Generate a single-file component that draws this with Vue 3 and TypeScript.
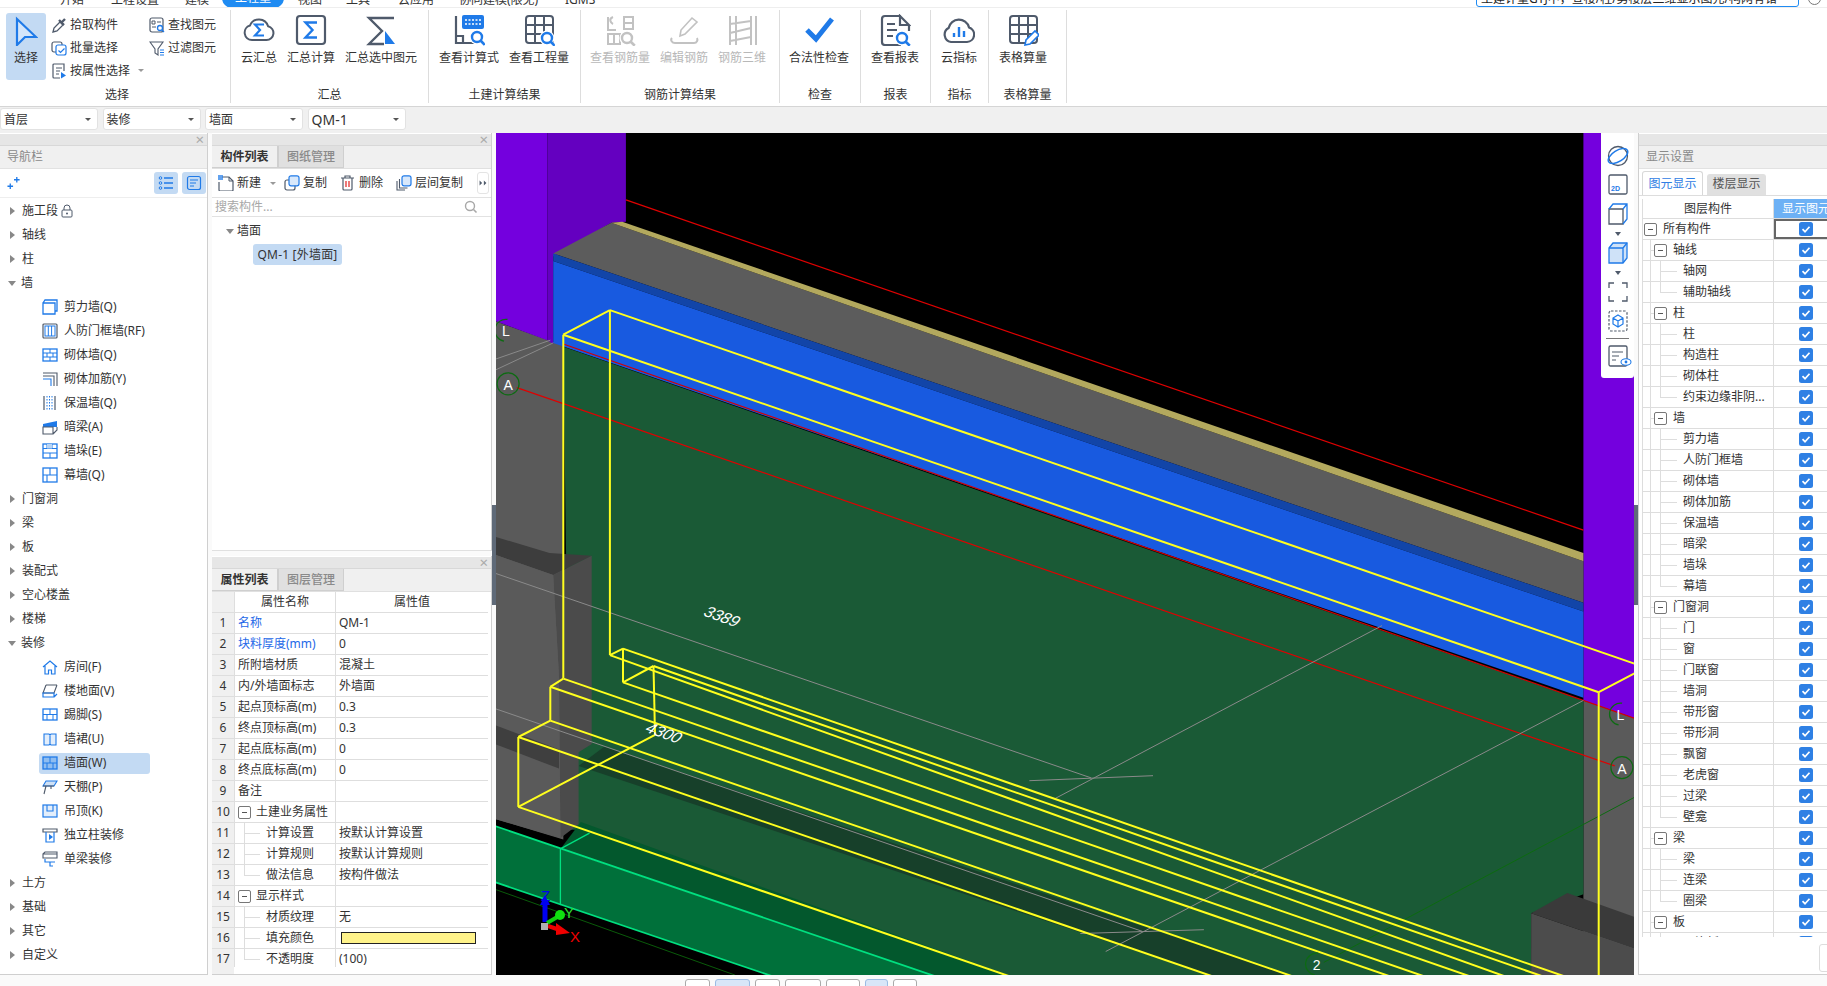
<script setup lang="ts">
type P = [number, number]
const D = '#4f5a6b'
const B = '#1f7ae8'
const G = '#c2c2c2'
const s = (c: string, w = 2) => `fill="none" stroke="${c}" stroke-width="${w}"`

const lens = (cx: number, cy: number, r = 5, c = B) =>
  `<circle cx="${cx}" cy="${cy}" r="${r + 2.5}" fill="#fff"/><circle cx="${cx}" cy="${cy}" r="${r}" ${s(c, 2.4)}/><path d="M${cx + r * 0.75} ${cy + r * 0.75}l4 4" ${s(c, 2.6)}/>`
const grid = (c: string) =>
  `<rect x="3" y="2" width="27" height="27" rx="3" ${s(c)}/><path d="M3 11h27M3 20h27M12 2v27M21 2v27" ${s(c)}/>`

const bigIcons: Record<string, string> = {
  cloudSum: `<path d="M9 26h14.5a7 7 0 0 0 1.6-13.8A9.6 9.6 0 0 0 7 11.5 7.4 7.4 0 0 0 9 26z" ${s(D)}/><path d="M21 10.5h-9l5 5.5-5 5.5h9" ${s(B, 2.2)}/>`,
  sum: `<rect x="2" y="2" width="28" height="28" rx="3" ${s(D, 2.2)}/><path d="M22 8.5H10.5l7 7.5-7 7.5H22" ${s(B, 2.4)}/>`,
  sumSel: `<path d="M29 4H4l13 13L4 30h15" ${s(D, 2.4)}/><path d="M20 17l10 13H20z" fill="${B}"/>`,
  calc: `<path d="M3 2v27h21M3 22h7v7" ${s(D, 2.2)}/><rect x="9" y="1" width="22" height="14" rx="2" fill="${B}"/><path d="M12 6h16M12 10h16" fill="none" stroke="#fff" stroke-width="1.6" stroke-dasharray="2 1.5"/>${lens(24, 23)}`,
  qty: `${grid(D)}${lens(24, 24)}`,
  rebarQty: `<path d="M4 3v13h8M4 20h12v10H4zM10 20v10" ${s(G)}/><path d="M20 3h9v12h-9zM20 9h9M9 3c-5 2-2 6 0 7" ${s(G)}/>${lens(23, 24, 5, G)}`,
  rebarEdit: `<path d="M4 24c-2 2 0 5 3 5h19c3 0 4-3 3-5" ${s(G)}/><path d="M12 22l1-6L24 4l5 4-12 12z" ${s(G, 1.6)}/>`,
  rebar3d: `<path d="M4 2v29M10 2v29M25 2v29M30 2v29M4 10l21-3M4 19l21-5M4 27l21-4" ${s(G, 2)}/>`,
  check: `<path d="M4 16l9 9L29 5" ${s(B, 5)}/>`,
  report: `<path d="M22 2H6a3 3 0 0 0-3 3v23a3 3 0 0 0 3 3h16M21 2l9 9h-9zM30 11v6" ${s(D, 2.2)}/><path d="M8 10h8M8 16h10M8 22h6" ${s(D, 2)}/>${lens(23, 24)}`,
  index: `<path d="M8 28h16a7.5 7.5 0 0 0 2-14.6A10.5 10.5 0 0 0 5.6 14 7.5 7.5 0 0 0 8 28z" ${s(D, 2.2)}/><path d="M11 19v4M16 13v10M21 17v6" ${s(B, 2.4)}/>`,
  sheet: `${grid(D)}<path d="M18 31l1-5 9-9 4 4-9 9z" fill="#fff" stroke="${B}" stroke-width="1.6"/>`,
}
const smallIcons: Record<string, string> = {
  pick: `<path d="M2 15l1-4 6-6 3 3-6 6z" ${s(D, 1.3)}/><path d="M8 3l5 5M10 6l4-4" ${s(D, 2.4)}/>`,
  batch: `<rect x="1" y="2" width="10" height="10" rx="2" ${s(D, 1.2)}/><rect x="5" y="5" width="10" height="10" rx="2" fill="#fff" stroke="${B}" stroke-width="1.2"/><path d="M7.5 10.5l2 2 4-4" ${s(B, 1.2)}/>`,
  attr: `<path d="M3 1h10v7M3 1a1 1 0 0 0-1 1v12a1 1 0 0 0 1 1h6" ${s(D, 1.2)}/><path d="M5 5h6M5 8h4M5 11h3" ${s(D, 1.2)}/><path d="M10 9l5 3.5-5 3z" fill="${B}"/>`,
  find: `<rect x="1" y="1" width="13" height="14" rx="2" ${s(D, 1.2)}/><path d="M3 4h3v3H3zM8 5h4M3 10h4" ${s(D, 1)}/><circle cx="11" cy="11" r="2.5" ${s(B, 1.3)}/><path d="M13 13l2 2" ${s(B, 1.3)}/>`,
  filter: `<path d="M1 2h13L9 9v6L6 13V9z" ${s(D, 1.1)}/><path d="M11 10h4M11 12.5h4M11 15h4" ${s(B, 1.1)}/>`,
  list: `<path d="M6 3h9M6 8h9M6 13h9" ${s(B, 1.3)}/><circle cx="2.5" cy="3" r="1.3" ${s(B, 1)}/><circle cx="2.5" cy="8" r="1.3" ${s(B, 1)}/><circle cx="2.5" cy="13" r="1.3" ${s(B, 1)}/>`,
  doc: `<rect x="1.5" y="1.5" width="13" height="13" rx="2" ${s(B, 1.2)}/><path d="M4 5h8M4 8h6M4 11h4" ${s(B, 1.1)}/>`,
  spark: `<path d="M10 1v6M7 4h6M3 8v6M0 11h6" ${s(B, 1.4)}/>`,
  anew: `<path d="M4 2h7l4 4v9a1 1 0 0 1-1 1H2a1 1 0 0 1-1-1V7" ${s(D, 1.2)}/><path d="M11 2v4h4" ${s(D, 1)}/><rect x="0" y="0" width="5" height="5" fill="${B}" opacity=".7"/>`,
  copy: `<rect x="1" y="5" width="10" height="10" rx="2" ${s(D, 1.2)}/><rect x="5" y="0.8" width="10" height="10" rx="2" fill="#d8e8fb" stroke="${B}" stroke-width="1.2"/>`,
  del: `<path d="M1 3h13M5 3V1h5v2M3 3v11a1 1 0 0 0 1 1h7a1 1 0 0 0 1-1V3" ${s(D, 1.2)}/><path d="M6 6v6M9 6v6" stroke="#e02020" stroke-width="1.2"/>`,
  floorCopy: `<path d="M1 6v9h8M3.500 4v9h8" ${s(D, 1.1)}/><rect x="6" y="0.8" width="9" height="10" rx="2" fill="#d8e8fb" stroke="${B}" stroke-width="1.2"/>`,
  search: `<circle cx="7" cy="7" r="4.500" ${s('#a8a8a8', 1.4)}/><path d="M10.500 10.500l3 3" ${s('#a8a8a8', 1.6)}/>`,
  more: `<path d="M3 5l3 3-3 3zM8 5l3 3-3 3z" fill="${D}"/>`,
  lock: `<rect x="2" y="6" width="10" height="7" rx="1" ${s(D, 1)}/><path d="M4 6V4a3 3 0 0 1 6 0v2" ${s(D, 1)}/><circle cx="7" cy="9.500" r="1" fill="${D}"/>`,
  shear: `<path d="M1 4h12v11H1zM1 4l2-3h12v11h-2" ${s(B, 1.3)}/>`,
  rf: `<rect x="1" y="1" width="14" height="14" rx="1" ${s(D, 1.2)}/><rect x="3" y="3" width="10" height="10" ${s(B, 1)}/><path d="M6.300 3v10M9.600 3v10" ${s(B, 1)}/>`,
  brick: `<rect x="1" y="2" width="14" height="12" ${s(B, 1.3)}/><path d="M1 6h14M1 10h14M8 2v4M5 6v4M11 6v4M8 10v4" ${s(B, 1)}/>`,
  reinforce: `<path d="M1 2h14v13M1 5h11v10" ${s(D, 1.1)}/><path d="M1 8h8v7" ${s(B, 1.1)}/>`,
  insul: `<path d="M2 1v14M13 1v14" ${s(D, 1.2)}/><path d="M7.500 1v14M5 1v14M10 1v14" fill="none" stroke="${B}" stroke-width="1" stroke-dasharray="1.500 1.500"/>`,
  hidden: `<path d="M1 5l14-3v6H1z" fill="${B}"/><path d="M1 8h10v7H1zM11 15l4-4V8" ${s(D, 1.1)}/>`,
  pier: `<rect x="1" y="1" width="14" height="14" ${s(B, 1.3)}/><path d="M1 5.500h14M1 10h14M5 1v4.500M10 1v4.500M8 10v5" ${s(B, 1)}/><path d="M5 1h5v4.500H5z" fill="#b7d4f5"/>`,
  curtain: `<rect x="1" y="1" width="14" height="14" ${s(B, 1.3)}/><path d="M1 8h14M8 1v7M5 8v7" ${s(B, 1.1)}/>`,
  room: `<path d="M1 8l7-6 7 6M3 7v8h3.500v-4h3v4H13V7" ${s(B, 1.2)}/>`,
  floor: `<path d="M4 2h11M4 2L1 10h11l3-8" ${s(D, 1.1)}/><path d="M1 10h11v4H1zM12 14l3-3" ${s(B, 1.2)}/>`,
  skirt: `<rect x="1" y="2" width="14" height="11" ${s(B, 1.3)}/><path d="M1 7.500h14M8 2v5.500M5 7.500V13M11 7.500V13" ${s(B, 1)}/>`,
  wainscot: `<path d="M2 3h5l1 1 1-1h5v11H9l-1-1-1 1H2zM8 4v9" fill="#e3eefb" stroke="${B}" stroke-width="1.100"/>`,
  face: `<rect x="1" y="2" width="14" height="12" fill="#8fbdf0" stroke="${B}" stroke-width="1.300"/><path d="M1 8h14M8 2v6M5 8v6M11 8v6" ${s(B, 1)}/>`,
  ceiling: `<path d="M1 7l3-5h11l-3 5z" fill="#cfe1f6" stroke="${B}" stroke-width="1.100"/><path d="M1 7h11M4 7l-2 8M9 7v3" ${s(D, 1.100)}/>`,
  hang: `<rect x="1" y="2" width="14" height="12" fill="#e3eefb" stroke="${B}" stroke-width="1.200"/><path d="M5 2v6h6V2" ${s(B, 1.100)}/>`,
  column: `<path d="M1 2h14v3H1z" ${s(D, 1.200)}/><path d="M4 5v10h8V5" ${s(B, 1.200)}/><path d="M7 7l4 3-4 3z" fill="${B}"/>`,
  beam: `<path d="M1 3h14v4H1zM1 3l2-2h12v2" ${s(D, 1.100)}/><path d="M3 8v3h10M8 11v4h3" ${s(B, 1.200)}/>`,
}

interface BigBtn { label: string; icon: string; muted?: boolean }
interface Group { title: string; width: number; pad: number; btns: BigBtn[] }
const groups: Group[] = [
  { title: '汇总', width: 198, pad: 10, btns: [{ label: '云汇总', icon: 'cloudSum' }, { label: '汇总计算', icon: 'sum' }, { label: '汇总选中图元', icon: 'sumSel' }] },
  { title: '土建计算结果', width: 152, pad: 10, btns: [{ label: '查看计算式', icon: 'calc' }, { label: '查看工程量', icon: 'qty' }] },
  { title: '钢筋计算结果', width: 199, pad: 9, btns: [{ label: '查看钢筋量', icon: 'rebarQty', muted: true }, { label: '编辑钢筋', icon: 'rebarEdit', muted: true }, { label: '钢筋三维', icon: 'rebar3d', muted: true }] },
  { title: '检查', width: 81, pad: 9, btns: [{ label: '合法性检查', icon: 'check' }] },
  { title: '报表', width: 70, pad: 10, btns: [{ label: '查看报表', icon: 'report' }] },
  { title: '指标', width: 58, pad: 10, btns: [{ label: '云指标', icon: 'index' }] },
  { title: '表格算量', width: 78, pad: 10, btns: [{ label: '表格算量', icon: 'sheet' }] },
]
const menus = [
  { t: '开始', x: 60 }, { t: '工程设置', x: 111 }, { t: '建模', x: 185 }, { t: '工程量', x: 222, on: true },
  { t: '视图', x: 298 }, { t: '工具', x: 346 }, { t: '云应用', x: 398 }, { t: '协同建模(限免)', x: 459 }, { t: 'IGMS', x: 565 },
]
const dropdowns = ['首层', '装修', '墙面', 'QM-1']

interface NavItem { t: string; kind: 'closed' | 'open' | 'leaf'; icon?: string; on?: boolean; lock?: boolean }
const nav: NavItem[] = [
  { t: '施工段', kind: 'closed', lock: true }, { t: '轴线', kind: 'closed' }, { t: '柱', kind: 'closed' }, { t: '墙', kind: 'open' },
  { t: '剪力墙(Q)', kind: 'leaf', icon: 'shear' }, { t: '人防门框墙(RF)', kind: 'leaf', icon: 'rf' }, { t: '砌体墙(Q)', kind: 'leaf', icon: 'brick' },
  { t: '砌体加筋(Y)', kind: 'leaf', icon: 'reinforce' }, { t: '保温墙(Q)', kind: 'leaf', icon: 'insul' }, { t: '暗梁(A)', kind: 'leaf', icon: 'hidden' },
  { t: '墙垛(E)', kind: 'leaf', icon: 'pier' }, { t: '幕墙(Q)', kind: 'leaf', icon: 'curtain' },
  { t: '门窗洞', kind: 'closed' }, { t: '梁', kind: 'closed' }, { t: '板', kind: 'closed' }, { t: '装配式', kind: 'closed' }, { t: '空心楼盖', kind: 'closed' }, { t: '楼梯', kind: 'closed' },
  { t: '装修', kind: 'open' }, { t: '房间(F)', kind: 'leaf', icon: 'room' }, { t: '楼地面(V)', kind: 'leaf', icon: 'floor' }, { t: '踢脚(S)', kind: 'leaf', icon: 'skirt' },
  { t: '墙裙(U)', kind: 'leaf', icon: 'wainscot' }, { t: '墙面(W)', kind: 'leaf', icon: 'face', on: true }, { t: '天棚(P)', kind: 'leaf', icon: 'ceiling' },
  { t: '吊顶(K)', kind: 'leaf', icon: 'hang' }, { t: '独立柱装修', kind: 'leaf', icon: 'column' }, { t: '单梁装修', kind: 'leaf', icon: 'beam' },
  { t: '土方', kind: 'closed' }, { t: '基础', kind: 'closed' }, { t: '其它', kind: 'closed' }, { t: '自定义', kind: 'closed' },
]

interface Row { name: string; value?: string; blue?: boolean; group?: boolean; child?: boolean; last?: boolean; swatch?: boolean }
const rows: Row[] = [
  { name: '名称', value: 'QM-1', blue: true }, { name: '块料厚度(mm)', value: '0', blue: true }, { name: '所附墙材质', value: '混凝土' },
  { name: '内/外墙面标志', value: '外墙面' }, { name: '起点顶标高(m)', value: '0.3' }, { name: '终点顶标高(m)', value: '0.3' },
  { name: '起点底标高(m)', value: '0' }, { name: '终点底标高(m)', value: '0' }, { name: '备注' },
  { name: '土建业务属性', group: true }, { name: '计算设置', value: '按默认计算设置', child: true }, { name: '计算规则', value: '按默认计算规则', child: true },
  { name: '做法信息', value: '按构件做法', child: true, last: true }, { name: '显示样式', group: true }, { name: '材质纹理', value: '无', child: true },
  { name: '填充颜色', child: true, swatch: true }, { name: '不透明度', value: '(100)', child: true, last: true },
]

const layerGroups: [string, string[]][] = [
  ['轴线', ['轴网', '辅助轴线']], ['柱', ['柱', '构造柱', '砌体柱', '约束边缘非阴...']],
  ['墙', ['剪力墙', '人防门框墙', '砌体墙', '砌体加筋', '保温墙', '暗梁', '墙垛', '幕墙']],
  ['门窗洞', ['门', '窗', '门联窗', '墙洞', '带形窗', '带形洞', '飘窗', '老虎窗', '过梁', '壁龛']],
  ['梁', ['梁', '连梁', '圈梁']], ['板', ['现浇板']],
]
interface Layer { t: string; level: number; last?: boolean }
const layers: Layer[] = [{ t: '所有构件', level: 0 }]
for (const [g, kids] of layerGroups) {
  layers.push({ t: g, level: 1 })
  kids.forEach((k, i) => layers.push({ t: k, level: 2, last: i === kids.length - 1 }))
}

const arrowSvg = `<path d="M13 14h6l-3 4z" fill="${D}"/>`
const sideIcons = [
  { h: 30, svg: `<circle cx="16" cy="16" r="9.500" ${s(D, 1.300)}/><ellipse cx="16" cy="16" rx="11" ry="5.500" transform="rotate(-32 16 16)" ${s(B, 1.500)}/>` },
  { h: 28, svg: `<rect x="7" y="6" width="18" height="19" rx="1.500" ${s(D, 1.300)}/><text x="9" y="22" font-size="7" font-weight="700" fill="${B}" font-family="Liberation Sans">2D</text>` },
  { h: 30, svg: `<path d="M7 11h14v15H7z" fill="none" stroke="${D}" stroke-width="1.300"/><path d="M7 11l4-5h14v15l-4 5M21 11l4-5" ${s(B, 1.300)}/>` },
  { h: 10, svg: arrowSvg },
  { h: 28, svg: `<path d="M7 11l4-5h14v15l-4 5H7z" fill="#cfe2f8" stroke="${B}" stroke-width="1.300"/><path d="M7 11h14v15M21 11l4-5" ${s(B, 1.300)}/>` },
  { h: 12, svg: arrowSvg },
  { h: 26, svg: `<path d="M7 12V7h5M20 7h5v5M25 20v5h-5M12 25H7v-5" ${s(D, 1.300)}/>` },
  { h: 32, svg: `<rect x="7" y="6" width="18" height="20" rx="2" fill="none" stroke="${D}" stroke-width="1.200" stroke-dasharray="2.500 1.500"/><path d="M16 10l5 3v6l-5 3-5-3v-6zM11 13l5 3 5-3M16 16v6" ${s(B, 1.200)}/>` },
]

/* Scene: coordinates are measured on a 1568×1568 normalised crop of the viewport */
const sx = 1 / 1.3754
const sy = 1 / 1.832
const mx = (x: number) => +(x * sx - 1).toFixed(1)
const my = (y: number) => +(y * sy - 3).toFixed(1)
const pts = (a: P[]) => a.map(([x, y]) => `${mx(x)},${my(y)}`).join(' ')
const polys: { fill: string; p: string }[] = ([
  ['#5a5a5a', [[0, 350], [94, 395], [94, 1300], [0, 1262]]],
  ['#7400de', [[0, 5], [72, 5], [72, 385], [0, 350]]],
  ['#6400c0', [[72, 5], [180, 5], [180, 168], [160, 170], [80, 232], [80, 392], [72, 385]]],
  ['#7400de', [[1497, 5], [1568, 5], [1568, 1078], [1497, 1045]]],
  ['#5a5a5a', [[1497, 1045], [1568, 1078], [1568, 1550], [1497, 1550]]],
  ['#5c5c5c', [[160, 170], [1497, 790], [1497, 866], [80, 226]]],
  ['#b3a95e', [[160, 170], [175, 168], [1497, 775], [1497, 790]]],
  ['#1245a8', [[80, 226], [1497, 866], [1497, 882], [80, 240]]],
  ['#185ae0', [[80, 240], [1497, 882], [1497, 1040], [80, 390]]],
  ['#1a5a36', [[94, 397], [1497, 1045], [1497, 1400], [1425, 1435], [1425, 1550], [710, 1550], [120, 1282], [100, 1282], [100, 1000]]],
  ['#03582d', [[90, 1317], [118, 1268], [710, 1550], [605, 1550]]],
  ['#00703a', [[0, 1275], [90, 1317], [605, 1550], [381, 1550], [0, 1378]]],
  ['#17402a', [[115, 1165], [150, 1130], [1096, 1550], [986, 1550]]],
  ['#3d3d3d', [[0, 745], [75, 775], [133, 780], [80, 815], [0, 778]]],
  ['#4b4b4b', [[80, 815], [133, 780], [133, 1125], [115, 1140], [115, 1272], [90, 1297], [88, 1000]]],
  ['#5a5a5a', [[0, 778], [80, 815], [88, 1000], [90, 1297], [0, 1262]]],
  ['#3f3f3f', [[0, 1090], [88, 1135], [88, 1170], [0, 1125]]],
  ['#3a3a3a', [[1425, 1435], [1475, 1398], [1568, 1442], [1568, 1500]]],
  ['#4c4c4c', [[1425, 1435], [1568, 1500], [1568, 1550], [1425, 1550]]],
] as [string, P[]][]).map(([fill, a]) => ({ fill, p: pts(a) }))

const L = (c: string, w: number, ...a: P[]) => ({ c, w, p: pts(a) })
const Y = '#ffff1e'
const W = 2
const lines = [
  L('#e00000', 1.2, [180, 128], [1497, 733]),
  L('#d40000', 1.2, [94, 392], [1568, 1078]),
  L('#e00000', 1.2, [30, 472], [1540, 1165]),
  L('#8a8a8a', 1, [0, 812], [820, 1187]),
  L('#8a8a8a', 1, [0, 1060], [890, 1468]),
  L('#8a8a8a', 1, [770, 1225], [1220, 908]),
  L('#8a8a8a', 1, [840, 1505], [1497, 1045]),
  L('#8a8a8a', 1, [735, 1192], [905, 1183]),
  L('#8a8a8a', 1, [805, 1472], [975, 1465]),
  L('#8a8a8a', 1, [0, 440], [80, 390]),
  L('#8a8a8a', 1, [0, 420], [76, 385]),
  L('#0c6a10', 1, [1140, 1525], [1568, 1222]),
  L('#0a5a0a', 1, [0, 1391], [330, 1548]),
  L('#00e080', 1.8, [0, 1378], [381, 1550]),
  L('#00e080', 1.8, [0, 1275], [605, 1550]),
  L('#00e080', 1.3, [90, 1317], [90, 1420]),
  L('#00e080', 1.3, [90, 1317], [130, 1288]),
  L(Y, W, [158, 330], [1568, 978]),
  L(Y, W, [94, 375], [158, 330]),
  L(Y, W, [94, 375], [1518, 1030]),
  L(Y, W, [1518, 1030], [1568, 995]),
  L(Y, W, [94, 375], [94, 1005]),
  L(Y, W, [158, 330], [158, 962]),
  L(Y, W, [1518, 1030], [1518, 1550]),
  L(Y, W, [158, 962], [176, 950]),
  L(Y, W, [176, 950], [176, 1012]),
  L(Y, W, [176, 1012], [218, 982]),
  L(Y, W, [218, 982], [220, 1108]),
  L(Y, W, [158, 962], [1388, 1550]),
  L(Y, W, [176, 950], [1470, 1550]),
  L(Y, W, [218, 982], [1440, 1550]),
  L(Y, W, [176, 1012], [1340, 1550]),
  L(Y, W, [94, 1005], [76, 1020]),
  L(Y, W, [76, 1020], [76, 1082]),
  L(Y, W, [76, 1082], [32, 1112]),
  L(Y, W, [32, 1112], [32, 1240]),
  L(Y, W, [32, 1240], [220, 1108]),
  L(Y, W, [94, 1005], [1277, 1550]),
  L(Y, W, [76, 1020], [1230, 1550]),
  L(Y, W, [76, 1082], [1096, 1550]),
  L(Y, W, [32, 1112], [986, 1550]),
  L(Y, W, [32, 1240], [707, 1550]),
]
const axes = [
  { t: 'L', x: 15, y: 367, partial: true }, { t: 'A', x: 18, y: 465 }, { t: 'L', x: 1548, y: 1070, partial: true }, { t: 'A', x: 1550, y: 1168 }, { t: '2', x: 1130, y: 1528, partial: true },
].map((a) => ({ t: a.t, x: mx(a.x), y: my(a.y), partial: a.partial }))
const dims = [
  { t: '3389', x: mx(312), y: my(892) },
  { t: '4300', x: mx(232), y: my(1105) },
]
const statusBtns = [
  { w: 25, on: false }, { w: 35, on: true }, { w: 25, on: false }, { w: 36, on: false }, { w: 34, on: false }, { w: 23, on: true }, { w: 24, on: false },
]
</script>

<template>
  <div class="app">
    <header class="menubar">
      <span v-for="m in menus" :key="m.t" class="menu" :class="{ on: m.on }" :style="{ left: m.x + 'px' }">{{ m.t }}</span>
      <div class="helpbox">土建计量GTJ中，查楼/柱/剪楼层二维显示图元/构网有错</div>
      <span class="help-dot"></span>
    </header>

    <section class="ribbon">
      <div class="group first">
        <div class="group-body">
          <button class="select-btn">
            <svg width="24" height="30" viewBox="0 0 24 30"><path d="M3 3l19 18H11l-8 8z" fill="#d5e6fa" stroke="#1f7ae8" stroke-width="2.200" /></svg>
            <span>选择</span>
          </button>
          <div class="small-col">
            <div class="small"><svg width="16" height="16" viewBox="0 0 16 16" v-html="smallIcons.pick"></svg>拾取构件</div>
            <div class="small"><svg width="16" height="16" viewBox="0 0 16 16" v-html="smallIcons.batch"></svg>批量选择</div>
            <div class="small"><svg width="16" height="16" viewBox="0 0 16 16" v-html="smallIcons.attr"></svg>按属性选择<i class="caret ml"></i></div>
          </div>
          <div class="small-col second">
            <div class="small"><svg width="16" height="16" viewBox="0 0 16 16" v-html="smallIcons.find"></svg>查找图元</div>
            <div class="small"><svg width="16" height="16" viewBox="0 0 16 16" v-html="smallIcons.filter"></svg>过滤图元</div>
          </div>
        </div>
        <div class="group-title first-title">选择</div>
      </div>
      <div v-for="g in groups" :key="g.title" class="group" :style="{ width: g.width + 'px' }">
        <div class="group-body big-row" :style="{ paddingLeft: g.pad + 'px' }">
          <div v-for="b in g.btns" :key="b.label" class="big" :class="{ muted: b.muted }">
            <svg width="32" height="32" viewBox="0 0 32 32" v-html="bigIcons[b.icon]"></svg>
            <span>{{ b.label }}</span>
          </div>
        </div>
        <div class="group-title">{{ g.title }}</div>
      </div>
    </section>

    <section class="selectors">
      <div v-for="d in dropdowns" :key="d" class="dropdown"><span :class="{ latin: d === 'QM-1' }">{{ d }}</span><i class="caret dark"></i></div>
    </section>

    <main class="workspace">
      <aside class="panel nav">
        <div class="strip"><span class="close">×</span></div>
        <div class="panel-title">导航栏</div>
        <div class="nav-tools">
          <svg class="spark" width="14" height="14" viewBox="0 0 14 15" v-html="smallIcons.spark"></svg>
          <span class="tool-on"><svg width="16" height="16" viewBox="0 0 16 16" v-html="smallIcons.list"></svg></span>
          <span class="tool-on"><svg width="16" height="16" viewBox="0 0 16 16" v-html="smallIcons.doc"></svg></span>
        </div>
        <div class="nav-tree">
          <div v-for="n in nav" :key="n.t" class="nav-row" :class="n.kind">
            <template v-if="n.kind === 'leaf'">
              <div class="nav-leaf" :class="{ on: n.on }">
                <svg width="16" height="16" viewBox="0 0 16 16" v-html="smallIcons[n.icon!]"></svg>
                <span>{{ n.t }}</span>
              </div>
            </template>
            <template v-else>
              <i class="arrow" :class="n.kind"></i><span>{{ n.t }}</span>
              <svg v-if="n.lock" class="lock" width="14" height="14" viewBox="0 0 14 14" v-html="smallIcons.lock"></svg>
            </template>
          </div>
        </div>
      </aside>

      <div class="middle">
        <section class="panel parts">
          <div class="strip"><span class="close">×</span></div>
          <div class="tabs"><span class="tab on">构件列表</span><span class="tab">图纸管理</span></div>
          <div class="parts-tools">
            <span class="ptool first-tool"><svg width="16" height="16" viewBox="0 0 16 16" v-html="smallIcons.anew"></svg>新建<i class="caret ml2"></i></span>
            <span class="ptool"><svg width="16" height="16" viewBox="0 0 16 16" v-html="smallIcons.copy"></svg>复制</span>
            <span class="ptool"><svg width="16" height="16" viewBox="0 0 16 16" v-html="smallIcons.del"></svg>删除</span>
            <span class="ptool"><svg width="16" height="16" viewBox="0 0 16 16" v-html="smallIcons.floorCopy"></svg>层间复制</span>
            <span class="more"><svg width="12" height="16" viewBox="0 0 14 16" v-html="smallIcons.more"></svg></span>
          </div>
          <div class="search"><span>搜索构件...</span><svg width="16" height="16" viewBox="0 0 16 16" v-html="smallIcons.search"></svg></div>
          <div class="parts-tree">
            <div class="parts-head"><i class="arrow open"></i>墙面</div>
            <div class="parts-pill">QM-1 [外墙面]</div>
          </div>
        </section>
        <section class="panel props">
          <div class="strip"><span class="close">×</span></div>
          <div class="tabs"><span class="tab on">属性列表</span><span class="tab">图层管理</span></div>
          <div class="ptable">
            <div class="prow phead"><span class="pno"></span><span class="pname center">属性名称</span><span class="pval center">属性值</span></div>
            <div v-for="(r, i) in rows" :key="r.name" class="prow">
              <span class="pno">{{ i + 1 }}</span>
              <span class="pname" :class="{ blue: r.blue, grp: r.group, child: r.child, last: r.last }">
                <i v-if="r.group" class="minus"></i>{{ r.name }}
              </span>
              <span class="pval"><i v-if="r.swatch" class="swatch"></i>{{ r.value }}</span>
            </div>
          </div>
          <div class="pfoot"><span></span></div>
        </section>
      </div>

      <div class="handle"></div>

      <div class="canvas">
        <svg class="scene" width="1138" height="842" viewBox="0 0 1138 842">
          <polygon v-for="(p, i) in polys" :key="'p' + i" :points="p.p" :fill="p.fill" />
          <polyline v-for="(l, i) in lines" :key="'l' + i" :points="l.p" :stroke="l.c" :stroke-width="l.w" fill="none" />
          <g v-for="a in axes" :key="a.t + a.x">
            <circle :cx="a.x" :cy="a.y" r="11" fill="none" stroke="#0d6b12" stroke-width="1.200" :stroke-dasharray="a.partial ? '34 36' : undefined" :transform="a.partial ? `rotate(100 ${a.x} ${a.y})` : undefined" />
            <text :x="a.x" :y="a.y + 6" class="axis">{{ a.t }}</text>
          </g>
          <text v-for="d in dims" :key="d.t" class="dim" :transform="`translate(${d.x} ${d.y}) rotate(20) skewX(-12)`" text-anchor="middle" y="5">{{ d.t }}</text>
          <g class="gizmo">
            <path d="M49 789v-18" stroke="#0000f0" stroke-width="5" />
            <path d="M44 772l5-10 5 10z" fill="#0000f0" />
            <path d="M51 790l12-7" stroke="#10d010" stroke-width="4" />
            <circle cx="64" cy="782" r="5" fill="#10e010" />
            <path d="M52 793l12 4" stroke="#f00000" stroke-width="4" />
            <path d="M60 790l14 10-14 2z" fill="#f00000" />
            <rect x="45" y="790" width="7" height="7" fill="#b0b0b0" />
            <text x="45" y="768" class="gz" fill="#0000f0">Z</text>
            <text x="68" y="785" class="gz" fill="#30e030">Y</text>
            <text x="74" y="809" class="gz" fill="#f00000">X</text>
          </g>
        </svg>
        <div class="side-tools">
          <svg v-for="(ic, i) in sideIcons" :key="i" width="32" :height="ic.h" :viewBox="`0 ${16 - ic.h / 2} 32 ${ic.h}`" v-html="ic.svg"></svg>
          <div class="side-sep"></div>
          <svg width="32" height="24" viewBox="0 0 32 24">
            <rect x="7" y="2" width="18" height="20" rx="1.500" fill="none" stroke="#4f5a6b" stroke-width="1.300" />
            <path d="M10 8h11M10 12h7M10 16h4" fill="none" stroke="#4f5a6b" stroke-width="1.200" />
            <ellipse cx="24" cy="18" rx="5" ry="3.200" fill="#fff" stroke="#1f7ae8" stroke-width="1.100" />
            <circle cx="24" cy="18" r="1.400" fill="#1f7ae8" />
          </svg>
        </div>
      </div>

      <div class="handle right"></div>

      <aside class="panel display">
        <div class="strip"></div>
        <div class="panel-title">显示设置</div>
        <div class="disp-tabs"><span class="dtab on">图元显示</span><span class="dtab">楼层显示</span></div>
        <div class="ltable">
          <div class="lrow lhead"><span class="lname center">图层构件</span><span class="lval">显示图元</span></div>
          <div v-for="(l, i) in layers" :key="l.t + i" class="lrow" :class="{ sel: i === 0 }">
            <span class="lname" :class="['lv' + l.level, { last: l.last }]">
              <i v-if="l.level < 2" class="minus"></i>{{ l.t }}
            </span>
            <span class="lval">
              <svg width="14" height="14" viewBox="0 0 14 14"><rect width="14" height="14" rx="2.500" fill="#2f80e4" /><path d="M3.500 7.200l2.500 2.500 4.500-5" fill="none" stroke="#fff" stroke-width="1.700" /></svg>
            </span>
          </div>
        </div>
        <div class="disp-foot"><span class="cut-btn"></span></div>
      </aside>
    </main>

    <footer class="statusbar">
      <span v-for="(b, i) in statusBtns" :key="i" class="sbtn" :class="{ on: b.on }" :style="{ width: b.w + 'px' }"></span>
    </footer>
  </div>
</template>

<style>
html, body { margin: 0; padding: 0; background: #fafafa; overflow: hidden; }
</style>

<style scoped>
.app {
  width: 1827px;
  height: 986px;
  overflow: hidden;
  display: flex;
  flex-direction: column;
  background: #fafafa;
  color: #333;
  font: 12px/16px "Noto Sans", "Noto Sans CJK SC", sans-serif;
}
svg { display: block; flex: none; }
i { display: inline-block; font-style: normal; }

.menubar { position: relative; height: 7px; flex: none; overflow: hidden; background: #fff; border-bottom: 1px solid #eee; }
.menu { position: absolute; top: -8px; line-height: 16px; white-space: nowrap; }
.menu.on { top: -12px; width: 62px; height: 20px; line-height: 20px; padding-top: 0; border-radius: 10px; background: #1f8bf2; color: #fff; text-align: center; }
.helpbox { position: absolute; left: 1476px; top: -10px; width: 317px; height: 15px; padding-left: 4px; box-sizing: content-box; line-height: 16px; border: 1px solid #1f8bf2; border-radius: 3px; color: #222; white-space: nowrap; overflow: hidden; }
.help-dot { position: absolute; left: 1808px; top: -8px; width: 11px; height: 11px; border: 1px solid #777; border-radius: 50%; }

.ribbon { height: 99px; flex: none; display: flex; align-items: flex-start; background: #fff; border-bottom: 1px solid #d5d5d5; box-sizing: border-box; }
.group { height: 93px; margin-top: 2px; display: flex; flex-direction: column; border-right: 1px solid #ddd; box-sizing: border-box; flex: none; }
.group.first { width: 231px; }
.group-body { flex: 1; display: flex; min-height: 0; }
.group-title { height: 16px; text-align: center; }
.first-title { padding-left: 4px; }
.big-row { gap: 10px; }
.big { display: flex; flex-direction: column; align-items: center; padding-top: 4px; white-space: nowrap; }
.big span { margin-top: 4px; }
.big.muted span { color: #b8b8b8; }

.select-btn { all: unset; box-sizing: border-box; margin: 3px 0 0 6px; width: 40px; height: 67px; border-radius: 3px; background: #c3daf3; display: flex; flex-direction: column; align-items: center; padding-top: 3px; }
.select-btn span { margin-top: 4px; }
.select-btn svg { margin-right: 1px; }
.small-col { margin: 3px 0 0 5px; width: 98px; }
.small-col.second { margin-left: 0; width: 70px; }
.small { height: 23px; display: flex; align-items: center; gap: 3px; white-space: nowrap; }
.caret { width: 0; height: 0; border: 3px solid transparent; border-top: 3.500px solid #999; border-bottom: 0; }
.caret.ml { margin-left: 5px; }
.caret.ml2 { margin-left: 6px; }
.caret.dark { border-top-color: #555; }

.selectors { height: 26px; flex: none; box-sizing: border-box; background: #f0f0f0; padding-top: 1px; display: flex; gap: 4.500px; }
.dropdown { box-sizing: border-box; width: 98px; height: 22px; padding: 1px 6px 0 3px; background: #fff; border: 1px solid #e2e2e2; border-radius: 3px; display: flex; justify-content: space-between; align-items: center; }
.latin { font-size: 14px; }

.workspace { height: 843px; flex: none; display: flex; }
.panel { background: #fff; box-sizing: border-box; display: flex; flex-direction: column; min-height: 0; }
.strip { height: 11px; margin-top: 1px; background: #e6e6e6; border-bottom: 1px solid #d8d8d8; flex: none; position: relative; box-sizing: content-box; }
.close { position: absolute; right: 3px; top: -2px; font-size: 15px; line-height: 14px; color: #aaa; }
.panel-title { height: 22px; line-height: 22px; background: #f0f0f0; color: #8a8a8a; padding-left: 7px; border-bottom: 1px solid #e2e2e2; flex: none; }

.nav { width: 208px; height: 842px; border-right: 1px solid #cfcfcf; border-bottom: 1px solid #cfcfcf; margin-right: 4px; flex: none; }
.nav-tools { height: 28px; flex: none; display: flex; align-items: center; justify-content: flex-end; gap: 4px; padding-right: 1px; border-bottom: 1px solid #eee; position: relative; }
.spark { position: absolute; left: 7px; top: 7px; }
.tool-on { width: 24px; height: 22px; border-radius: 3px; background: #c3daf3; display: flex; align-items: center; justify-content: center; }
.nav-tree { padding-top: 1px; }
.nav-row { height: 24px; display: flex; align-items: center; padding-left: 9px; white-space: nowrap; }
.nav-row.leaf { padding-left: 39px; }
.arrow { width: 0; height: 0; margin-right: 8px; flex: none; }
.arrow.closed { border: 4px solid transparent; border-left: 5px solid #888; border-right: 0; margin-left: 1px; margin-right: 7px; }
.arrow.open { border: 4px solid transparent; border-top: 5px solid #888; border-bottom: 0; margin-left: -1px; margin-right: 5px; }
.lock { margin-left: 2px; }
.nav-leaf { display: flex; align-items: center; gap: 6px; width: 111px; height: 21px; padding-left: 3px; box-sizing: border-box; border-radius: 3px; }
.nav-leaf.on { background: #c3daf3; }

.middle { width: 280px; flex: none; display: flex; flex-direction: column; gap: 5px; height: 842px; }
.parts { height: 418px; flex: none; border-right: 1px solid #cfcfcf; border-bottom: 1px solid #e0e0e0; }
.props { height: 419px; flex: none; border-right: 1px solid #cfcfcf; border-bottom: 1px solid #cfcfcf; }
.tabs { height: 22px; display: flex; background: #f0f0f0; flex: none; border-bottom: 1px solid #e0e0e0; }
.tab { box-sizing: border-box; width: 66px; height: 22px; line-height: 21px; text-align: center; background: #e0e0e0; color: #8a8a8a; border: 1px solid #cfcfcf; border-top: 0; font-weight: 500; }
.tab.on { background: #f0f0f0; color: #333; border-left: 0; font-weight: 700; }
.parts-tools { height: 28px; flex: none; display: flex; align-items: center; padding-left: 6px; border-bottom: 1px solid #e2e2e2; position: relative; }
.ptool { display: flex; align-items: center; gap: 3px; margin-right: 13px; white-space: nowrap; }
.ptool.first-tool { margin-right: 8px; }
.more { position: absolute; right: 2px; top: 3px; width: 10px; height: 20px; border: 1px solid #e4e4e4; border-radius: 3px; display: flex; align-items: center; justify-content: center; overflow: hidden; }
.search { height: 18px; flex: none; display: flex; align-items: center; justify-content: space-between; padding: 0 12px 0 3px; color: #a8a8a8; border-bottom: 1px solid #e2e2e2; }
.parts-tree { padding: 4px 0 0 14px; }
.parts-head { height: 20px; display: flex; align-items: center; padding-left: 1px; }
.parts-head .arrow.open { margin-right: 3px; }
.parts-pill { margin: 2.500px 0 0 27px; width: 89px; height: 21px; line-height: 21px; text-align: center; background: #c3daf3; border-radius: 3px; white-space: nowrap; letter-spacing: .2px; }

.ptable { flex: 1; min-height: 0; overflow: hidden; margin-right: 3px; }
.prow { display: flex; height: 21px; box-sizing: border-box; border-bottom: 1px solid #dedede; }
.pno { width: 22px; flex: none; background: #f0f0f0; border-right: 1px solid #dedede; text-align: center; line-height: 20px; box-sizing: content-box; }
.pname { width: 97px; flex: none; padding-left: 3px; line-height: 20px; border-right: 1px solid #dedede; position: relative; white-space: nowrap; box-sizing: content-box; }
.pval { flex: 1; padding-left: 3px; line-height: 20px; position: relative; white-space: nowrap; }
.center { text-align: center; padding-left: 0; }
.phead .pname { width: 100px; }
.blue { color: #2468e8; }
.pname.grp { padding-left: 21px; width: 79px; }
.pname.child { padding-left: 31px; width: 69px; }
.pname .minus { position: absolute; left: 3px; top: 4px; }
.pname.child::before { content: ""; position: absolute; left: 9px; top: -1px; bottom: 0; border-left: 1px solid #ddd; }
.pname.child.last::before { bottom: 10px; }
.pname.child::after { content: ""; position: absolute; left: 9px; width: 16px; top: 10px; border-top: 1px solid #ddd; }
.minus { width: 11px; height: 11px; border: 1px solid #777; border-radius: 2px; background: #fff; z-index: 1; }
.minus::after { content: ""; display: block; width: 5px; margin: 5px 0 0 3px; border-top: 1px solid #555; }
.swatch { position: absolute; left: 5px; top: 4px; width: 133px; height: 10px; background: #fff38a; border: 1px solid #222; }
.pfoot { height: 7px; flex: none; }
.pfoot span { display: block; width: 22px; height: 7px; background: #f0f0f0; }

.handle { width: 4px; flex: none; height: 842px; background: linear-gradient(#fafafa 372px, #5f6a78 372px, #5f6a78 472px, #fafafa 472px); }
.handle.right { width: 4px; }
.canvas { position: relative; width: 1138px; height: 842px; flex: none; background: #000; overflow: hidden; }
.scene { position: absolute; left: 0; top: 0; }
.axis { font: 14px "Liberation Sans", sans-serif; fill: #fff; text-anchor: middle; }
.dim { font: italic 16px "Liberation Sans", sans-serif; fill: #fff; }
.gz { font: 15px "Liberation Sans", sans-serif; }
.side-tools { position: absolute; right: 0; top: 0; width: 33px; height: 245px; background: #fff; border-radius: 0 0 3px 3px; display: flex; flex-direction: column; align-items: center; padding-top: 8px; box-sizing: border-box; }
.side-sep { width: 23px; border-top: 1px solid #777; margin: 1px 0 5px; flex: none; }

.display { width: 189px; height: 842px; flex: none; border-left: 1px solid #cfcfcf; border-bottom: 1px solid #cfcfcf; overflow: hidden; }
.disp-tabs { height: 26px; flex: none; display: flex; align-items: flex-end; gap: 4px; padding-left: 3px; border-bottom: 1px solid #ddd; }
.dtab { box-sizing: border-box; width: 59px; height: 21px; line-height: 20px; text-align: center; background: #e0e0e0; border-radius: 3px 3px 0 0; color: #555; }
.dtab.on { width: 61px; height: 24px; line-height: 23px; background: #fff; color: #2f80e4; border: 1px solid #d8d8d8; border-bottom: 0; }
.ltable { margin: 3px 0 0 3px; height: 738px; flex: none; width: 200px; overflow: hidden; border-left: 1px solid #ddd; box-sizing: border-box; }
.lrow { display: flex; height: 21px; box-sizing: border-box; border-bottom: 1px solid #ddd; }
.lname { width: 131px; flex: none; box-sizing: border-box; border-right: 1px solid #ddd; line-height: 20px; position: relative; white-space: nowrap; }
.lval { width: 63px; flex: none; display: flex; align-items: center; justify-content: center; }
.lhead { height: 20px; }
.lhead .lval { background: #6db1f5; color: #fff; line-height: 20px; display: block; padding-left: 8px; box-sizing: border-box; white-space: nowrap; }
.lrow.sel .lval { box-shadow: inset 2px 2px 0 #666, inset 0 -2px 0 #666; }
.lv0 { padding-left: 20px; }
.lv1 { padding-left: 30px; }
.lv2 { padding-left: 40px; }
.lname .minus { position: absolute; top: 4px; }
.lv0 .minus { left: 1px; }
.lv1 .minus { left: 11px; }
.lv1::before, .lv2::before { content: ""; position: absolute; left: 7px; top: -1px; bottom: 0; border-left: 1px solid #ddd; }
.lv1::after { content: ""; position: absolute; left: 7px; width: 5px; top: 10px; border-top: 1px solid #ddd; }
.lv2::after { content: ""; position: absolute; left: 17px; width: 16px; top: -1px; height: 11px; border-left: 1px solid #ddd; border-bottom: 1px solid #ddd; }
.lv2:not(.last) { background: linear-gradient(#ddd, #ddd) 17px 0 / 1px 100% no-repeat; }
.lname.center { text-align: center; padding-right: 0; }
.disp-foot { flex: 1; position: relative; }
.cut-btn { position: absolute; left: 180px; top: 7px; width: 30px; height: 26px; border: 1px solid #ddd; border-radius: 3px; }

.statusbar { flex: 1; display: flex; gap: 5px; padding: 3px 0 0 685px; overflow: hidden; background: #fafafa; }
.sbtn { height: 14px; flex: none; box-sizing: border-box; border: 1px solid #aaa; border-radius: 3px; background: #fff; }
.sbtn.on { background: #d8e6f8; border-color: #9bbce4; }
</style>
